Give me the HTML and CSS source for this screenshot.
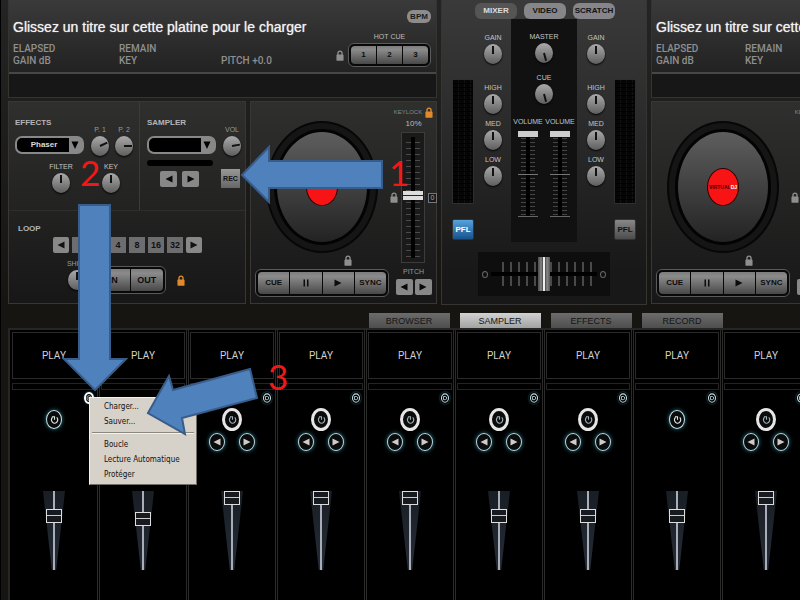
FILE: index.html
```html
<!DOCTYPE html>
<html lang="fr">
<head>
    <meta charset="UTF-8">
    <meta name="viewport" content="width=device-width, initial-scale=1.0">
    <title>Virtual DJ - Sampler</title>
    <link rel="stylesheet" href="styles.css">
</head>
<body>
    <svg class="symbols" aria-hidden="true">
        <symbol id="lock" viewBox="0 0 9 12">
            <path d="M2.2 6V3.6a2.3 2.6 0 0 1 4.6 0V6" fill="none" stroke="currentColor" stroke-width="1.5"/>
            <rect x="0.5" y="5" width="8" height="7" rx="1" fill="currentColor"/>
        </symbol>
        <symbol id="prev" viewBox="0 0 8 8"><path d="M7.5 0.5v7L0.5 4z" fill="currentColor"/></symbol>
        <symbol id="next" viewBox="0 0 8 8"><path d="M0.5 0.5v7L7.5 4z" fill="currentColor"/></symbol>
        <symbol id="drop" viewBox="0 0 8 8"><path d="M0.5 0.5h7L4 8z" fill="currentColor"/></symbol>
        <symbol id="pause" viewBox="0 0 8 8"><path d="M1.5 0.5h1.5v7H1.5zM5 0.5h1.5v7H5z" fill="currentColor"/></symbol>
        <symbol id="power" viewBox="0 0 12 14">
            <path d="M3.4 4a4 4.6 0 1 0 5.6 0.2" fill="none" stroke="currentColor" stroke-width="1.5"/>
            <path d="M2.6 3.4h3.4v3.8" fill="none" stroke="currentColor" stroke-width="1.5"/>
        </symbol>
        <symbol id="gear" viewBox="0 0 12 14">
            <ellipse cx="6" cy="7" rx="4.2" ry="5" fill="none" stroke="currentColor" stroke-width="1.3"/>
            <path d="M4.2 5.2h2.2a1.6 1.9 0 0 1 0 3.8h-2.2z" fill="none" stroke="currentColor" stroke-width="1"/>
        </symbol>
    </svg>

    <main class="app">
        <div class="console">
            <section class="deck">
                <div class="info">
                    <h2 class="track">Glissez un titre sur cette platine pour le charger</h2>
                    <div class="hotcue-area">
                        <button class="bpm">BPM</button>
                        <span class="label">HOT CUE</span>
                        <div class="hotcue">
                            <svg class="lock"><use href="#lock"/></svg>
                            <div class="group">
                                <button>1</button>
                                <button>2</button>
                                <button>3</button>
                            </div>
                        </div>
                    </div>
                    <div class="times">
                        <span>ELAPSED</span><span>REMAIN</span><span></span>
                        <span>GAIN dB</span><span>KEY</span><span>PITCH +0.0</span>
                    </div>
                    <div class="wave"></div>
                </div>
                <div class="panels">
                    <div class="panel rack">
                        <div class="box effects">
                            <div class="line">
                                <div class="choice">
                                    <label for="effect">EFFECTS</label>
                                    <div class="combo">
                                        <select id="effect"><option>Phaser</option></select>
                                        <svg><use href="#drop"/></svg>
                                    </div>
                                </div>
                                <div class="pair">
                                    <label class="knob">P. 1<span class="dial"><input class="turn-65" type="range"></span></label>
                                    <label class="knob">P. 2<span class="dial"><input class="turn-90" type="range"></span></label>
                                </div>
                            </div>
                            <div class="tone">
                                <label class="knob bright">FILTER<span class="dial"><input type="range"></span></label>
                                <label class="knob bright">KEY<span class="dial"><input type="range"></span></label>
                            </div>
                        </div>
                        <div class="box sampler">
                            <div class="line">
                                <div class="choice">
                                    <label for="sample">SAMPLER</label>
                                    <div class="combo">
                                        <select id="sample"><option></option></select>
                                        <svg><use href="#drop"/></svg>
                                    </div>
                                </div>
                                <label class="knob">VOL<span class="dial"><input class="turn-80" type="range"></span></label>
                            </div>
                            <div class="progress"></div>
                            <div class="rec-row">
                                <button class="step" aria-label="Précédent"><svg><use href="#prev"/></svg></button>
                                <button class="step" aria-label="Suivant"><svg><use href="#next"/></svg></button>
                                <button class="rec">REC</button>
                            </div>
                        </div>
                        <div class="box loop">
                            <span class="title">LOOP</span>
                            <div class="beats">
                                <button class="step" aria-label="Moins"><svg><use href="#prev"/></svg></button>
                                <button>1</button>
                                <button>2</button>
                                <button>4</button>
                                <button>8</button>
                                <button>16</button>
                                <button>32</button>
                                <button class="step" aria-label="Plus"><svg><use href="#next"/></svg></button>
                            </div>
                            <div class="inout">
                                <label class="knob">SHIFT<span class="dial"><input type="range"></span></label>
                                <div class="group">
                                    <button>IN</button>
                                    <button>OUT</button>
                                </div>
                                <svg class="lock on"><use href="#lock"/></svg>
                            </div>
                        </div>
                    </div>
                    <div class="panel turntable">
                        <div class="player">
                            <div class="platter"><div class="disc"><div class="logo">VIRTUAL<b>DJ</b></div></div></div>
                            <svg class="lock"><use href="#lock"/></svg>
                            <div class="group">
                                <button>CUE</button>
                                <button aria-label="Pause"><svg><use href="#pause"/></svg></button>
                                <button aria-label="Lecture"><svg><use href="#next"/></svg></button>
                                <button>SYNC</button>
                            </div>
                        </div>
                        <div class="pitch">
                            <div class="keylock">KEYLOCK <svg class="lock on"><use href="#lock"/></svg></div>
                            <span class="label">10%</span>
                            <div class="pitch-row">
                                <svg class="lock"><use href="#lock"/></svg>
                                <div class="track-slot"><input class="slide" type="range" value="52" aria-label="Pitch"></div>
                                <button class="zero">0</button>
                            </div>
                            <span class="label dim">PITCH</span>
                            <div class="steps">
                                <button class="step" aria-label="Pitch -"><svg><use href="#prev"/></svg></button>
                                <button class="step" aria-label="Pitch +"><svg><use href="#next"/></svg></button>
                            </div>
                        </div>
                    </div>
                </div>
            </section>

            <section class="mixer">
                <div class="modes">
                    <button class="active">MIXER</button>
                    <button>VIDEO</button>
                    <button>SCRATCH</button>
                </div>
                <div class="channels">
                    <div class="side">
                        <div class="meter"></div>
                        <button class="pfl active">PFL</button>
                    </div>
                    <div class="eq">
                        <label class="knob bright">GAIN<span class="dial"><input type="range"></span></label>
                        <label class="knob bright">HIGH<span class="dial"><input type="range"></span></label>
                        <label class="knob bright">MED<span class="dial"><input type="range"></span></label>
                        <label class="knob bright">LOW<span class="dial"><input type="range"></span></label>
                    </div>
                    <div class="center">
                        <label class="knob bright">MASTER<span class="dial"><input class="turn-165" type="range"></span></label>
                        <label class="knob bright">CUE<span class="dial"><input class="turn-165" type="range"></span></label>
                        <div class="volumes">
                            <label class="volume">VOLUME<input class="slide" type="range" value="100"></label>
                            <label class="volume">VOLUME<input class="slide" type="range" value="100"></label>
                        </div>
                    </div>
                    <div class="eq">
                        <label class="knob bright">GAIN<span class="dial"><input type="range"></span></label>
                        <label class="knob bright">HIGH<span class="dial"><input type="range"></span></label>
                        <label class="knob bright">MED<span class="dial"><input type="range"></span></label>
                        <label class="knob bright">LOW<span class="dial"><input type="range"></span></label>
                    </div>
                    <div class="side">
                        <div class="meter"></div>
                        <button class="pfl">PFL</button>
                    </div>
                </div>
                <div class="crossfader">
                    <i></i>
                    <input type="range" value="50" aria-label="Crossfader">
                    <i></i>
                </div>
            </section>

            <section class="deck right">
                <div class="info">
                    <h2 class="track">Glissez un titre sur cette platine pour le charger</h2>
                    <div class="times">
                        <span>ELAPSED</span><span>REMAIN</span><span></span>
                        <span>GAIN dB</span><span>KEY</span><span>PITCH +0.0</span>
                    </div>
                    <div class="wave"></div>
                </div>
                <div class="panels">
                    <div class="panel turntable">
                        <div class="player">
                            <div class="platter"><div class="disc"><div class="logo">VIRTUAL<b>DJ</b></div></div></div>
                            <svg class="lock"><use href="#lock"/></svg>
                            <div class="group">
                                <button>CUE</button>
                                <button aria-label="Pause"><svg><use href="#pause"/></svg></button>
                                <button aria-label="Lecture"><svg><use href="#next"/></svg></button>
                                <button>SYNC</button>
                            </div>
                        </div>
                        <div class="pitch">
                            <div class="keylock">KEYLOCK <svg class="lock on"><use href="#lock"/></svg></div>
                            <span class="label">10%</span>
                            <div class="pitch-row">
                                <svg class="lock"><use href="#lock"/></svg>
                                <div class="track-slot"><input class="slide" type="range" value="52" aria-label="Pitch"></div>
                                <button class="zero">0</button>
                            </div>
                            <span class="label dim">PITCH</span>
                            <div class="steps">
                                <button class="step" aria-label="Pitch -"><svg><use href="#prev"/></svg></button>
                                <button class="step" aria-label="Pitch +"><svg><use href="#next"/></svg></button>
                            </div>
                        </div>
                    </div>
                </div>
            </section>
        </div>

        <nav class="tabs">
            <button>BROWSER</button>
            <button class="active">SAMPLER</button>
            <button>EFFECTS</button>
            <button>RECORD</button>
        </nav>

        <div class="pads" id="pads"></div>

        <div class="menu">
            <button>Charger...</button>
            <button>Sauver...</button>
            <hr>
            <button>Boucle</button>
            <button>Lecture Automatique</button>
            <button>Protéger</button>
        </div>

        <svg class="arrows" width="400" height="450" aria-hidden="true">
            <path d="M242 175L269 147V161H382V188H269V202Z"/>
            <path d="M79 205H110V359H126L95 390L64 359H79Z"/>
            <path d="M148 413L169 376L173 390L250 369L257 398L182 418L185 434Z"/>
        </svg>
        <span class="mark one">1</span>
        <span class="mark two">2</span>
        <span class="mark three">3</span>
    </main>

    <script src="pads.js"></script>
</body>
</html>
```

FILE: pads.js
```js
// simple: no previous/next buttons, open: options button highlighted
const pads = [
    { level: 73, simple: true, open: true },
    { level: 67, simple: true },
    { level: 100 },
    { level: 100 },
    { level: 100 },
    { level: 73 },
    { level: 73 },
    { level: 73, simple: true },
    { level: 100 }
];

const container = document.getElementById('pads');

pads.forEach((pad, index) => {
    const cell = document.createElement('div');
    cell.className = 'pad' + (pad.simple ? ' simple' : '') + (pad.open ? ' open' : '');
    cell.innerHTML = `
        <button class="play">PLAY</button>
        <div class="pad-bar"></div>
        <button class="options" aria-label="Options ${index + 1}"><svg><use href="#gear"/></svg></button>
        <button class="ring loop-mode" aria-label="Boucle ${index + 1}"><svg><use href="#power"/></svg></button>
        <div class="pad-steps">
            <button class="ring" aria-label="Précédent ${index + 1}"><svg><use href="#prev"/></svg></button>
            <button class="ring" aria-label="Suivant ${index + 1}"><svg><use href="#next"/></svg></button>
        </div>
        <div class="fader"><input class="slide" type="range" value="${pad.level}" aria-label="Volume ${index + 1}"></div>
    `;
    container.appendChild(cell);
});
```

FILE: styles.css
```css
* {
    box-sizing: border-box;
}

body {
    margin: 0;
    background: #161512;
    color: #bbb;
    font-family: "Liberation Sans", Arial, sans-serif;
    font-size: 8px;
    line-height: 10px;
}

button, select, input {
    margin: 0;
    padding: 0;
    border: none;
    font: inherit;
    color: inherit;
}

button {
    display: flex;
    align-items: center;
    justify-content: center;
    cursor: pointer;
}

button svg {
    width: 8px;
    height: 8px;
}

.symbols {
    display: none;
}

.app {
    position: relative;
    display: flex;
    flex-direction: column;
    min-height: 100vh;
    border-left: 1px solid #000;
    overflow: hidden;
}

.console {
    display: grid;
    grid-template-columns: minmax(429px, 1fr) 206px minmax(429px, 1fr);
    gap: 4px;
    padding-left: 7px;
    background: linear-gradient(#242424, #161512);
}

/* deck header */

.info {
    display: grid;
    grid-template-columns: 1fr auto;
    grid-template-rows: 43px 29px 25px;
    height: 98px;
    border: 1px solid #353431;
    border-top: none;
    background: linear-gradient(#3a3a3a, #222 74%, #171717);
}

.track {
    margin: 0;
    padding: 17px 0 0 4px;
    font-size: 14px;
    line-height: 20px;
    font-weight: 400;
    color: #f2f2f2;
    text-shadow: 0 0 1px #ccc;
    white-space: nowrap;
}

.times {
    display: grid;
    grid-column: 1;
    grid-row: 2;
    grid-template-columns: 106px 102px auto;
    justify-content: start;
    align-content: start;
    padding-left: 4px;
    font-family: Roboto, sans-serif;
    font-size: 10px;
    line-height: 12px;
    font-weight: 500;
    color: #8f8f8f;
    white-space: nowrap;
}

.right .times {
    grid-template-columns: 89px 102px auto;
}

.hotcue-area {
    grid-column: 2;
    grid-row: 1 / 3;
    display: flex;
    flex-direction: column;
    align-items: center;
    padding: 10px 5px 0 0;
}

.bpm {
    align-self: flex-end;
    width: 24px;
    height: 13px;
    border-radius: 6px;
    background: #8c8c8c;
    color: #1c1c1c;
    font-weight: 700;
}

.hotcue-area .label {
    margin: 9px 0 0 12px;
}

.hotcue {
    display: flex;
    align-items: center;
    gap: 4px;
    margin-top: 1px;
}

.hotcue .group {
    height: 24px;
}

.hotcue .group button {
    width: 25px;
}

.wave {
    grid-column: 1 / 3;
    grid-row: 3;
    border-top: 2px solid #484745;
    background: #171717;
}

.label {
    color: #bbb;
    font-size: 7px;
}

.label.dim {
    color: #999;
}

.lock {
    width: 8px;
    height: 11px;
    color: #8f8f8f;
}

.lock.on {
    color: #e08a2c;
}

/* grey buttons joined in a rounded frame */

.group {
    display: flex;
    gap: 1px;
    height: 28px;
    padding: 2px;
    border: 1px solid #5a5a5a;
    border-radius: 6px;
    background: #080808;
}

.group button {
    flex: 1;
    background: linear-gradient(#7d7d7d, #8b8b8b 20%, #484848);
    color: #0c0c0c;
    font-weight: 700;
}

.group button:first-child {
    border-radius: 4px 0 0 4px;
}

.group button:last-child {
    border-radius: 0 4px 4px 0;
}

/* knobs */

.knob {
    display: flex;
    flex-direction: column;
    align-items: center;
    gap: 1px;
    width: 24px;
    font-size: 7px;
    color: #999;
    white-space: nowrap;
}

.knob.bright {
    color: #c4c4c4;
}

.dial {
    display: flex;
    width: 18px;
    height: 20px;
    border-radius: 50%;
    background: linear-gradient(#aaa, #5e5e5e);
    box-shadow: 0 1px 2px #000;
}

.dial input {
    width: 100%;
    height: 100%;
    appearance: none;
    background: linear-gradient(#111, #111) 50% 2px / 2px 8px no-repeat;
}

.dial input::-webkit-slider-thumb {
    appearance: none;
    opacity: 0;
}

.turn-65 {
    transform: rotate(65deg);
}

.turn-80 {
    transform: rotate(80deg);
}

.turn-90 {
    transform: rotate(90deg);
}

.turn-165 {
    transform: rotate(165deg);
}

/* deck body */

.panels {
    display: grid;
    grid-template-columns: minmax(238px, 1fr) 187px;
    gap: 4px;
    margin-top: 3px;
}

.right .panels {
    grid-template-columns: 187px;
}

.panel {
    height: 203px;
    border: 1px solid #383735;
    background: linear-gradient(#2f2f2e, #171717);
}

.rack {
    display: grid;
    grid-template-columns: 130px 1fr;
    grid-template-rows: 108px 1fr;
}

.box {
    padding: 16px 0 0 6px;
}

.sampler {
    padding-left: 7px;
    border-left: 1px solid #3b3b39;
}

.line {
    display: flex;
    justify-content: flex-start;
    align-items: flex-end;
    gap: 4px;
    height: 38px;
}

.pair {
    display: flex;
}

.choice label, .title {
    display: block;
    margin-bottom: 8px;
    color: #b5b5b5;
    font-weight: 700;
}

.combo {
    display: flex;
    align-items: center;
    width: 69px;
    height: 18px;
    margin-bottom: 2px;
    padding-right: 3px;
    border: 2px solid #888;
    border-radius: 7px;
    background: linear-gradient(90deg, #000 52px, #888 52px);
    color: #000;
}

.combo select {
    flex: 1;
    height: 14px;
    appearance: none;
    background: none;
    color: #ddd;
    font-weight: 700;
    text-align: center;
    text-align-last: center;
}

.combo svg {
    width: 8px;
    height: 8px;
}

.tone {
    display: flex;
    gap: 26px;
    margin: 6px 0 0 34px;
}

.progress {
    width: 66px;
    height: 6px;
    margin-top: 4px;
    border-radius: 3px;
    background: #000;
}

.rec-row {
    display: flex;
    align-items: center;
    gap: 5px;
    margin: 3px 0 0 13px;
}

.rec-row .rec {
    width: 19px;
    height: 19px;
    margin-left: 17px;
    background: linear-gradient(#999, #666);
    color: #111;
    font-size: 7px;
    font-weight: 700;
}

.step {
    width: 17px;
    height: 16px;
    border-radius: 2px;
    background: #888;
    color: #080808;
}

.loop {
    grid-column: 1 / 3;
    padding: 13px 0 0 9px;
    border-top: 1px solid #2e2e2d;
}

.title {
    margin-bottom: 3px;
}

.beats {
    display: flex;
    gap: 3px;
    margin-left: 35px;
}

.beats button {
    width: 16px;
    height: 16px;
    background: #6d6d70;
    color: #111;
    font-size: 9px;
    font-weight: 700;
}

.beats .step {
    background: #888;
}

.inout {
    display: flex;
    align-items: flex-start;
    margin: 6px 0 0 47px;
}

.inout .group {
    width: 72px;
    margin: 7px 11px 0 5px;
}

.inout .lock {
    margin-top: 16px;
}

.inout .group button {
    font-size: 9px;
}

.turntable {
    display: grid;
    grid-template-columns: 131px 1fr;
    padding-left: 4px;
}

.player {
    display: flex;
    flex-direction: column;
    align-items: center;
    width: 134px;
    padding-top: 19px;
}

.platter {
    display: flex;
    width: 112px;
    height: 132px;
    padding: 6px;
    border: 2px solid #070707;
    border-radius: 50%;
    background: #151515;
}

.disc {
    display: flex;
    flex: 1;
    align-items: center;
    justify-content: center;
    border: 3px solid #030303;
    border-radius: 50%;
    background: linear-gradient(#5e5e5e, #232323);
}

.logo {
    display: flex;
    align-items: center;
    justify-content: center;
    width: 32px;
    height: 38px;
    border: 1px solid #300;
    border-radius: 50%;
    background: #f81414;
    color: #400;
    font-size: 5px;
    font-weight: 700;
}

.logo b {
    color: #fff;
}

.player .lock {
    margin: 2px 0 3px 52px;
}

.player .group {
    width: 100%;
}

.pitch {
    display: flex;
    flex-direction: column;
    align-items: center;
    padding: 4px 0 0 4px;
}

.keylock {
    display: flex;
    align-items: center;
    gap: 3px;
    color: #888;
    font-size: 6px;
    line-height: 12px;
}

.pitch .label {
    font-size: 8px;
    margin-top: 1px;
}

.pitch-row {
    display: flex;
    align-items: center;
    gap: 3px;
    margin: 3px 0 4px;
}

.pitch .label.dim {
    font-size: 7px;
    margin: 0 0 2px;
}

/* vertical sliders */

.slide {
    writing-mode: vertical-lr;
    direction: rtl;
    appearance: none;
    background: none;
}

.track-slot {
    display: flex;
    justify-content: center;
    width: 24px;
    height: 131px;
    padding: 4px 1px;
    border: 1px solid #3c3c3c;
    background: #1a1a1a;
}

.track-slot .slide {
    width: 20px;
    height: 121px;
    background:
        linear-gradient(#000, #000) 50% 0 / 4px 100% no-repeat,
        repeating-linear-gradient(transparent 0 5px, #4b4b4b 5px 6px) 50% 0 / 14px 100% no-repeat;
}

.track-slot .slide::-webkit-slider-thumb {
    appearance: none;
    width: 20px;
    height: 9px;
    background: linear-gradient(#ddd 4px, #222 4px 5px, #ddd 5px);
}

.zero {
    width: 9px;
    height: 10px;
    border: 1px solid #777;
    background: #1a1a1a;
    color: #aaa;
    font-size: 7px;
}

.steps {
    display: flex;
    gap: 2px;
}

/* mixer */

.mixer {
    height: 305px;
    border: 1px solid #353533;
    border-top: none;
    background: linear-gradient(#3a3a3a, #181818 90%);
}

.modes {
    display: flex;
    justify-content: center;
    gap: 7px;
    padding: 3px 0 0 2px;
}

.modes button {
    width: 42px;
    height: 16px;
    border-radius: 6px;
    background: #85858a;
    color: #111;
    font-weight: 700;
}

.modes .active {
    background: #555;
    color: #ddd;
}

.channels {
    display: grid;
    grid-template-columns: 22px 1fr 66px 1fr 22px;
    height: 223px;
    padding: 0 10px;
}

.side {
    padding-top: 60px;
}

.meter {
    height: 125px;
    border: 1px solid #2e2e2e;
    background:
        repeating-linear-gradient(transparent 0 3px, #000 3px 4px),
        repeating-linear-gradient(90deg, #050505 0 5px, #111 5px 6px);
}

.pfl {
    width: 22px;
    height: 21px;
    margin-top: 15px;
    border: 1px solid #333;
    border-radius: 2px;
    background: linear-gradient(#888, #4c4c4c);
    color: #111;
    font-size: 8px;
    font-weight: 700;
}

.pfl.active {
    background: linear-gradient(#57a3dd, #17538d);
    color: #fff;
}

.eq {
    display: flex;
    flex-direction: column;
    align-items: center;
    gap: 5px;
    padding: 14px 0 0 1px;
}

.eq .knob:first-child {
    margin-bottom: 14px;
}

.center {
    display: flex;
    flex-direction: column;
    align-items: center;
    gap: 10px;
    padding-top: 13px;
    background: #111;
}

.volumes {
    display: flex;
    gap: 4px;
    margin-top: 3px;
}

.volume {
    display: flex;
    flex-direction: column;
    align-items: center;
    gap: 4px;
    width: 28px;
    color: #c4c4c4;
    font-size: 7px;
    line-height: 10px;
}

.volume .slide {
    width: 20px;
    height: 86px;
    background:
        linear-gradient(#666, #666) 0 100% / 100% 1px no-repeat,
        linear-gradient(#777, #777) 0 50% / 100% 1px no-repeat,
        linear-gradient(#000, #000) 50% 0 / 4px 100% no-repeat,
        repeating-linear-gradient(transparent 0 3px, #444 3px 4px) 50% 0 / 14px 100% no-repeat;
}

.volume .slide::-webkit-slider-thumb {
    appearance: none;
    width: 20px;
    height: 6px;
    background: #ccc;
}

.crossfader {
    display: flex;
    align-items: center;
    justify-content: center;
    gap: 3px;
    width: 132px;
    height: 44px;
    margin: 10px auto 0;
    background: #0e0e0e;
}

.crossfader i {
    width: 6px;
    height: 7px;
    border: 1px solid #666;
    border-radius: 50%;
}

.crossfader input {
    width: 106px;
    height: 34px;
    appearance: none;
    background:
        linear-gradient(#000, #000) 0 50% / 100% 4px no-repeat,
        repeating-linear-gradient(90deg, transparent 0 6px, #4a4a4a 6px 8px) 50% 50% / 96px 24px no-repeat;
}

.crossfader input::-webkit-slider-thumb {
    appearance: none;
    width: 12px;
    height: 34px;
    background: linear-gradient(90deg, #555 1px, #888 3px, #444 5px, #eee 5px 7px, #444 7px, #888 9px, #555);
}

/* browser tabs */

.tabs {
    display: flex;
    gap: 10px;
    margin-top: 8px;
    padding-left: 46%;
}

.tabs button {
    width: 81px;
    height: 15px;
    background: linear-gradient(#6c6c6c, #4e4e4e);
    color: #141414;
    font-size: 9px;
}

.tabs .active {
    background: linear-gradient(#d2d2d2, #a2a2a2);
}

/* sampler pads */

.pads {
    display: grid;
    grid-template-columns: repeat(9, minmax(89px, 1fr));
    flex: 1;
    margin-left: 7px;
    padding-left: 1px;
    border: 2px solid #262624;
    border-width: 2px 0 0 2px;
    background: #000;
}

.pad {
    display: flex;
    flex-direction: column;
    align-items: center;
    padding: 2px 1px 0;
    border-right: 3px double #2b2b2a;
}

.play {
    width: 100%;
    height: 47px;
    border: 1px solid #2a2a2a;
    background: #000;
    color: #d2d2d2;
    font-family: Roboto, sans-serif;
    font-size: 10px;
}

.pad-bar {
    width: 100%;
    height: 7px;
    margin-top: 4px;
    border: 1px solid #242424;
}

.options {
    align-self: flex-end;
    width: 10px;
    height: 12px;
    margin: 2px 2px 0 0;
    border-radius: 50%;
    background: #000;
    box-shadow: 0 0 2px #3a7f92;
    color: #c2dde4;
}

.options svg {
    width: 10px;
    height: 12px;
}

.open .options {
    border: 2px solid #fff;
    color: #ddd;
}

.ring {
    width: 16px;
    height: 18px;
    border: 1px solid #b9d8de;
    border-radius: 50%;
    background: #0b0b0b;
    box-shadow: 0 0 4px #2f7f93;
    color: #ccc;
}

.loop-mode {
    width: 20px;
    height: 23px;
    margin-top: 4px;
    border: 3px solid #e6e6e6;
    box-shadow: none;
    color: #9fb0b4;
}

.loop-mode svg {
    width: 9px;
    height: 11px;
}

.simple .loop-mode {
    width: 16px;
    height: 19px;
    margin: 6px 0 2px;
    border: 1px solid #c9e0e5;
    box-shadow: 0 0 4px #2f7f93;
    color: #dde6e8;
}

.pad-steps {
    display: flex;
    gap: 14px;
    margin: 2px 0 40px;
}

.simple .pad-steps {
    visibility: hidden;
}

/* the wedge and the slider share one grid cell */

.fader {
    display: grid;
    width: 22px;
    height: 79px;
}

.fader::before {
    content: "";
    grid-area: 1 / 1;
    background: linear-gradient(#191e25, #252c36);
    clip-path: polygon(0 0, 100% 0, 60% 100%, 40% 100%);
}

.fader .slide {
    grid-area: 1 / 1;
    z-index: 1;
    width: 22px;
    height: 79px;
    background: linear-gradient(#a9adb8, #a9adb8) 50% 0 / 2px 100% no-repeat;
}

.fader .slide::-webkit-slider-thumb {
    appearance: none;
    width: 16px;
    height: 14px;
    border: 1px solid #ddd;
    background: linear-gradient(#171b20 5px, #ccc 5px 6px, #171b20 6px);
}

/* context menu */

.menu {
    position: absolute;
    z-index: 2;
    left: 88px;
    top: 397px;
    width: 108px;
    padding: 1px 0 2px;
    border: 1px solid #f4f2ee;
    border-right-color: #706d66;
    border-bottom-color: #706d66;
    background: #d6d2ca;
    color: #111;
}

.menu button {
    display: block;
    width: 100%;
    padding-left: 14px;
    background: none;
    font-family: "DejaVu Sans Condensed", "Open Sans", sans-serif;
    font-size: 8px;
    line-height: 15px;
    text-align: left;
}

.menu hr {
    margin: 3px 2px;
    border: none;
    border-top: 1px solid #8b8880;
    border-bottom: 1px solid #f4f2ee;
}

/* tutorial arrows and numbers */

.arrows {
    position: absolute;
    z-index: 3;
    left: -1px;
    top: 0;
    fill: #4f81bd;
    stroke: #385d8a;
    stroke-width: 2;
}

.mark {
    position: absolute;
    z-index: 3;
    color: #f01818;
    font-family: Lato, sans-serif;
    font-size: 35px;
    line-height: 36px;
}

.one {
    left: 388px;
    top: 154px;
}

.two {
    left: 79px;
    top: 154px;
}

.three {
    left: 267px;
    top: 358px;
}
```
